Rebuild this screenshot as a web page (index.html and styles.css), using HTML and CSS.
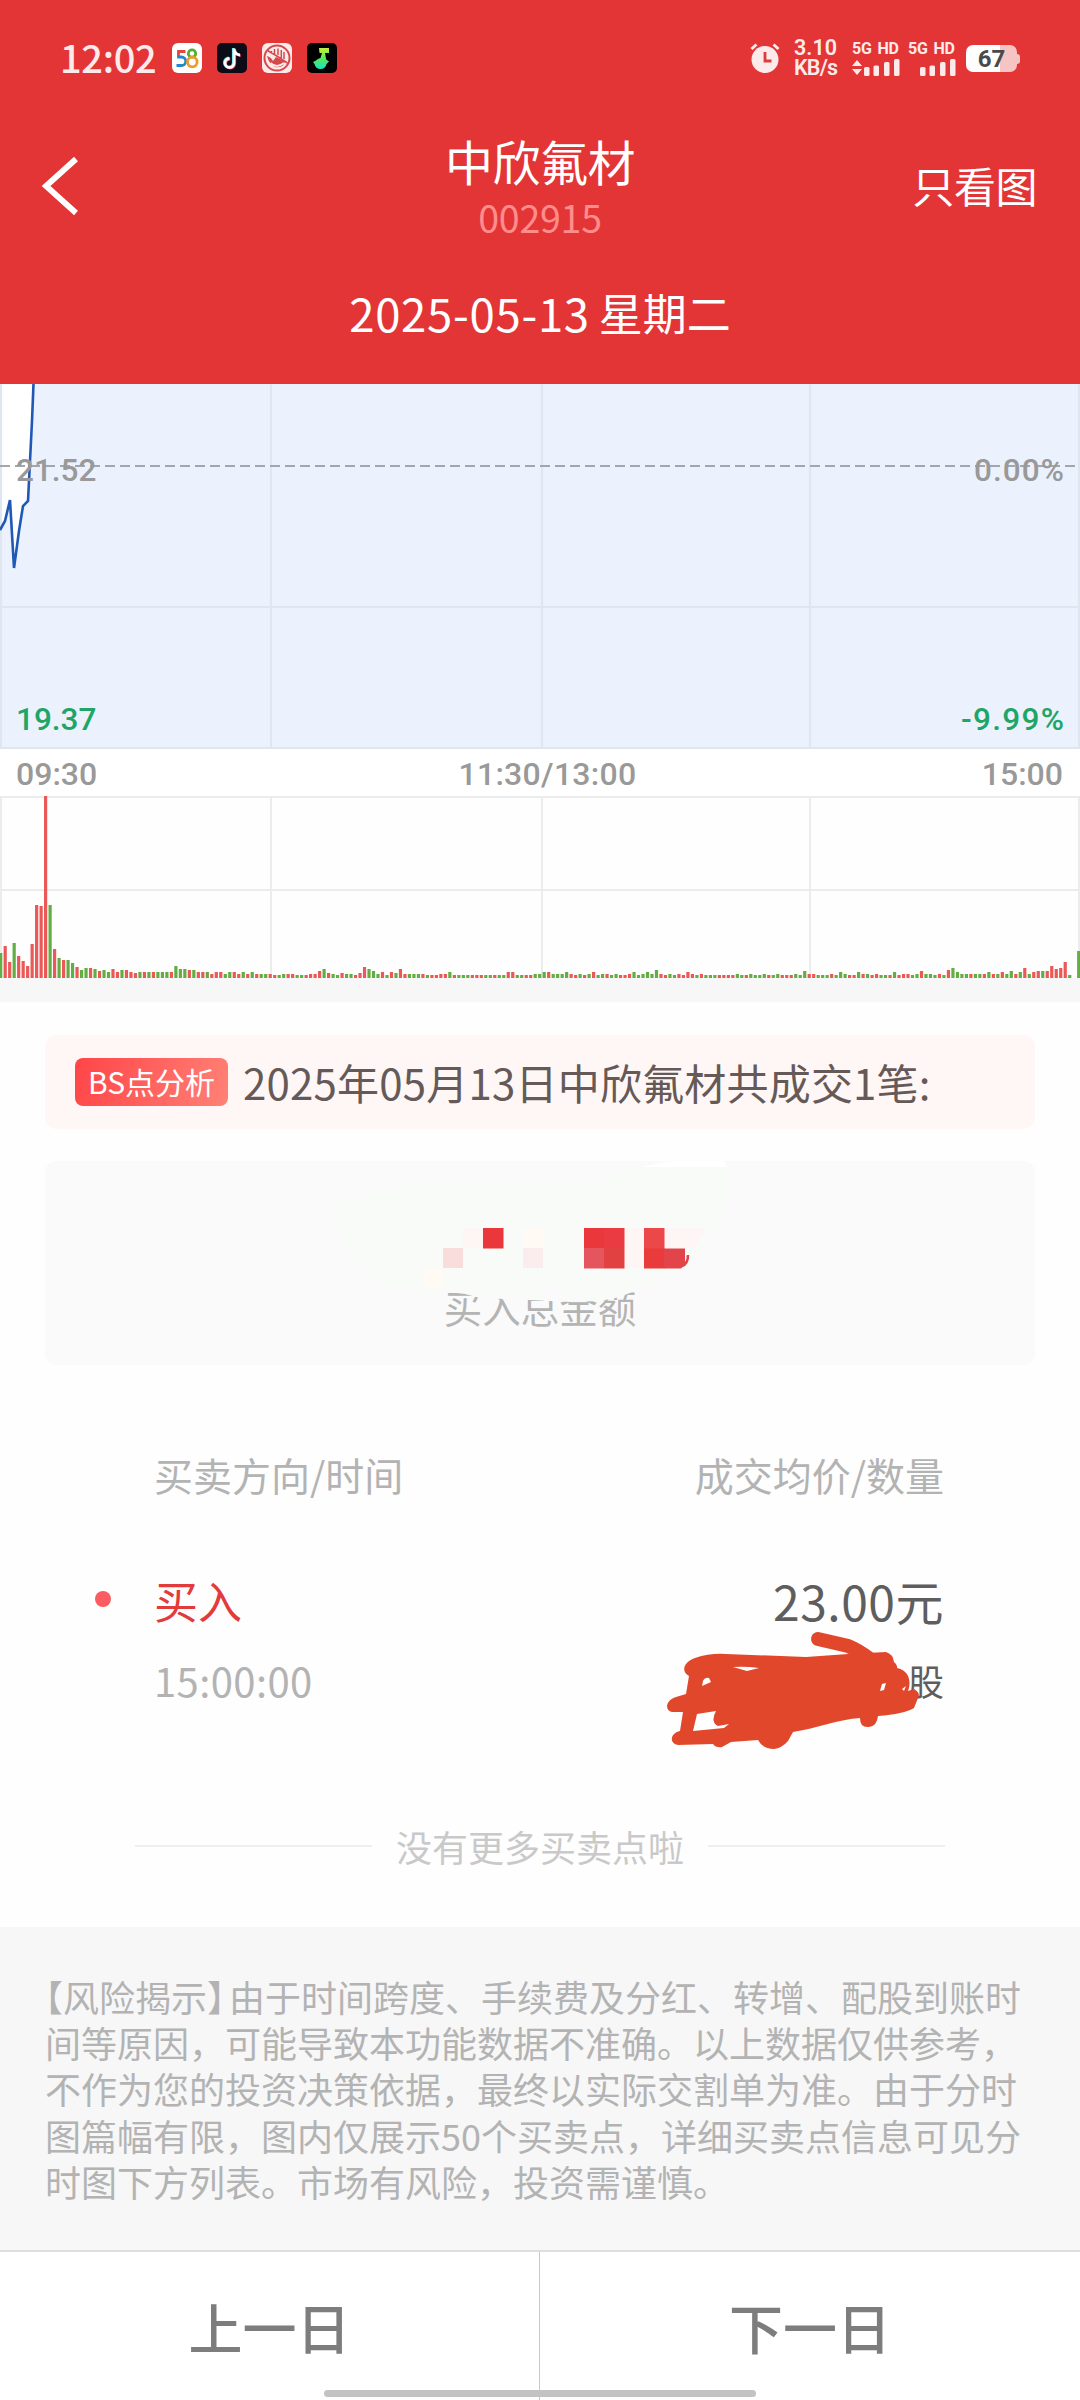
FILE: index.html
```html
<!DOCTYPE html>
<html lang="zh-CN">
<head>
<meta charset="utf-8">
<title>中欣氟材 002915</title>
<link rel="stylesheet" href="styles.css">
</head>
<body>
<header class="header">
  <div class="status">
    <div class="status-left">
      <span class="clock">12:02</span>
      <svg class="app" viewBox="0 0 30 30"><rect width="30" height="30" rx="6" fill="#fff"/><g fill="none" stroke-width="2.8"><path d="M13.500 8.500H6.500V14" stroke="#e2463f"/><path d="M5.200 14H9.500a4 4 0 0 1 0 8.500H4.500" stroke="#2686cc"/><circle cx="20" cy="10.500" r="3.700" stroke="#56b030"/><circle cx="20.300" cy="19" r="4.800" stroke="#ef9a2d"/></g></svg>
      <svg class="app" viewBox="0 0 30 30"><rect width="30" height="30" rx="5" fill="#0c0b18"/><g fill="none" stroke-width="2.8"><path d="M16.300 5v14.500a4.500 4.500 0 1 1-4.500-4.500M16.300 6q1.500 5.500 6 5.500" stroke="#42d9dc"/><path d="M17.700 6v14.500a4.500 4.500 0 1 1-4.500-4.500M17.700 7q1.500 5.500 6 5.500" stroke="#e84b63"/><path d="M17 5.500v14.500a4.500 4.500 0 1 1-4.500-4.500M17 6.500q1.500 5.500 6 5.500" stroke="#fff"/></g></svg>
      <svg class="app" viewBox="0 0 30 30"><rect width="30" height="30" rx="6" fill="#fdeaea"/><circle cx="15" cy="15" r="12.500" fill="none" stroke="#d4494c" stroke-width="2"/><path d="M5.500 7.500 14 12.500 25.500 20M9.500 10V8M12.500 11.500V6M16 12V5.500M19.300 15V7M22 16V9" stroke="#d4494c" stroke-width="1.500" fill="none"/><path d="M5 13q4 1 6 5l3-4 9 4.500-2 4q-3 2.500-8 1.500-6-3-8-11" fill="#d4494c"/><path d="M8.500 20q6 6 13.500 0" fill="none" stroke="#fdeaea" stroke-width="1.800"/></svg>
      <svg class="app" viewBox="0 0 30 30"><defs><linearGradient id="note" x1="0" y1="0" x2="0" y2="1"><stop offset="0" stop-color="#c8ef3c"/><stop offset=".5" stop-color="#58e85c"/><stop offset="1" stop-color="#17e5c0"/></linearGradient></defs><rect width="30" height="30" rx="5" fill="#000"/><path d="M12 5H22v5h-4l1.200 6.500L22 18.500 19.500 21q-1 5-6 5t-6-5L6 19l3-1.500q1.500-2 4.500-2.500L15 10h-2.500Z" fill="url(#note)"/></svg>
    </div>
    <div class="status-right">
      <svg class="alarm" viewBox="0 0 30 32"><circle cx="15" cy="17.500" r="13.500" fill="#fdeaea"/><path d="m1.500 7 5-4.500M28.500 7l-5-4.500" stroke="#fdeaea" stroke-width="3"/><path d="M15 10v9h6.500" stroke="#df3c3d" stroke-width="2.800" fill="none"/></svg>
      <div class="rate"><span>3.10</span><span>KB/s</span></div>
      <div class="sim"><span>5G HD</span><svg viewBox="0 0 48 17"><g fill="#fdeaea"><path d="m0 7 5-6 5 6ZM0 10h10l-5 6Z"/><rect x="12" y="8" width="5.500" height="9" rx="1.500"/><rect x="21.500" y="6.500" width="5.500" height="10.500" rx="1.500"/><rect x="32" y="3" width="5.500" height="14" rx="1.500"/><rect x="42" width="5.500" height="17" rx="1.500"/></g></svg></div>
      <div class="sim sim-b"><span>5G HD</span><svg viewBox="0 0 48 17"><g fill="#fdeaea"><rect x="12" y="8" width="5.500" height="9" rx="1.500"/><rect x="21.500" y="6.500" width="5.500" height="10.500" rx="1.500"/><rect x="32" y="3" width="5.500" height="14" rx="1.500"/><rect x="42" width="5.500" height="17" rx="1.500"/></g></svg></div>
      <div class="battery">67</div>
    </div>
  </div>
  <div class="nav">
    <svg class="back" viewBox="0 0 40 62"><path d="M36 4 6 31 36 58" fill="none" stroke="#fff" stroke-width="5.800"/></svg>
    <div class="stock"><h1>中欣氟材</h1><span>002915</span></div>
    <a class="only">只看图</a>
  </div>
  <div class="date"><span class="ymd">2025-05-13</span><span>星期二</span></div>
</header>
<main>
  <svg class="price" viewBox="0 0 1080 365">
    <rect width="1080" height="365" fill="#ebf2fe"/>
    <path d="M0 0H33.500L32 37 28 117 23 122 19 147 14 187 10 116 5 137 0 146Z" fill="#fff"/>
    <path d="M1 0V365M271 0V365M542 0V365M810 0V365M1079 0V365M0 223H1080M0 364H1080" stroke="#e0e6f0" stroke-width="2.200" fill="none"/>
    <path d="M0 82H1080" stroke="#a2a6ad" stroke-width="2" stroke-dasharray="10 5"/>
    <path d="M0 146 5 137 10 116 14 184 19 147 23 122 28 117 32 37 33.500 0" fill="none" stroke="#2058b5" stroke-width="2.600"/>
    <g class="quote"><text x="16" y="97" fill="#999">21.52</text><text x="1064" y="97" text-anchor="end" fill="#999" textLength="90">0.00%</text><text x="16" y="346" fill="#20a566">19.37</text><text x="1064" y="346" text-anchor="end" fill="#20a566" textLength="103">-9.99%</text></g>
  </svg>
  <div class="times"><span>09:30</span><span class="noon">11:30/13:00</span><span>15:00</span></div>
  <svg class="volume" viewBox="0 0 1080 182"><path d="M0 1H1080M0 94H1080M1 0V182M271 0V182M542 0V182M810 0V182M1079 0V182" stroke="#ececec" stroke-width="2"/><g id="bars"></g></svg>
  <div class="strip"></div>
  <section class="trades">
    <div class="banner"><span class="tag">BS点分析</span><span class="message">2025年05月13日中欣氟材共成交1笔:</span></div>
    <div class="summary">
      <span>买入总金额</span>
      <svg class="mosaic" viewBox="45 1161 990 204">
        <path d="M335 1220 350 1200Q380 1188 430 1185L600 1180 640 1167H727Q731 1200 720 1222 700 1265 637 1290L620 1297 600 1301 570 1302 530 1300 480 1298 465 1294 440 1291 385 1290Q345 1255 335 1220Z" fill="#f9fbf8"/>
        <path d="M643 1167Q668 1160 685 1161H724L727 1167Z" fill="#fff"/>
        <path d="M463 1228h20v20h-20zM624 1228h20v40h-20zM664 1228h42l-12 20h-30z" fill="#fdf6f5"/>
        <path d="M523 1228h20v20h-20zM423 1268h20v20h-20z" fill="#fffaf3"/>
        <path d="M443 1248h20v20h-20z" fill="#f9dddd"/><path d="M523 1248h20v20h-20z" fill="#fbecee"/>
        <path d="M483 1228h20.500v20.500h-20.500zM584 1228h20v20h-20z" fill="#ea373b"/><path d="M604 1228h20.500v20h-20.500z" fill="#e93b41"/>
        <path d="M584 1248h20v20.500h-20z" fill="#e4555e"/><path d="M604 1248h20.500v20.500h-20.500z" fill="#e24142"/>
        <path d="M644 1228h20.500v21h-20.500z" fill="#ec4749"/><path d="M644 1248.500h20.500v20h-20.500z" fill="#e93b3b"/><path d="M664 1248.500h21v16l-4 4h-17z" fill="#e2444a"/>
        <path d="M688 1255q0 9-6 11" fill="none" stroke="#e2444a" stroke-width="2.600"/>
        <path d="M544 1289h20v12h-20z" fill="#fcf9fd"/>
      </svg>
    </div>
    <div class="columns"><span>买卖方向/时间</span><span>成交均价/数量</span></div>
    <div class="row"><i class="dot"></i><span class="buy">买入</span><span class="cost">23.00元</span></div>
    <div class="row second"><span class="at">15:00:00</span><span class="shares">股</span>
      <svg class="scribble" viewBox="0 0 260 124" fill="#e1482b"><path d="M86 24 166 27 208 24 246 22Q253 24 254 32 258 35 257 38C268 40 272 50 268 61L274 59Q281 63 278 68L274 78Q264 84 238 86 237 96 229 97 220 98 220 88C200 89 174 99 153 102L148 111Q142 118 134 119 123 119 118 110L91 112 82 117Q76 118 73 114L38 115C29 114 30 103 40 101L43 82 32 82C24 80 26 70 36 67L46 64 49 46C41 42 43 32 55 28Q70 23 86 24Z"/><path d="M178 9 208 16Q218 20 230 29" fill="none" stroke="#e1482b" stroke-width="14" stroke-linecap="round"/><g fill="#fff"><path d="M93 37Q105 36 119 38L107 41ZM63 51Q65 47 69 48L71 52 62 56ZM57 84 76 81Q70 92 78 96L89 94 84 98 53 101ZM242 54 246 53 244 60 240 61ZM262 59 266 56 264 61Z"/></g></svg>
    </div>
    <div class="end"><i></i><span>没有更多买卖点啦</span><i></i></div>
  </section>
  <section class="risk"><p><span class="open">【</span>风险揭示<span class="close">】</span>由于时间跨度、手续费及分红、转增、配股到账时<br>间等原因，可能导致本功能数据不准确。以上数据仅供参考，<br>不作为您的投资决策依据，最终以实际交割单为准。由于分时<br>图篇幅有限，图内仅展示50个买卖点，详细买卖点信息可见分<br>时图下方列表。市场有风险，投资需谨慎。</p></section>
</main>
<footer class="days"><a>上一日</a><a>下一日</a><i class="home"></i></footer>
<script src="bars.js"></script>
</body>
</html>
```
FILE: styles.css
```css
* { box-sizing: border-box; }
body { margin: 0; width: 1080px; height: 2400px; overflow: hidden; background: #fefefe; font-family: "Noto Sans CJK SC", "Noto Sans", sans-serif; color: #5e5e5e; display: flex; flex-direction: column; }
svg { display: block; flex: none; }
span, a { white-space: nowrap; }
i { display: block; }
.header { height: 384px; background: #e33536; color: #fff; padding-top: 36px; flex: none; }
.status { height: 44px; display: flex; justify-content: space-between; padding: 0 60px 0 60px; color: #fdeaea; }
.status-left { display: flex; align-items: center; gap: 15px; }
.clock { font-size: 38px; font-weight: 500; line-height: 42px; height: 44px; width: 97px; letter-spacing: -.3px; }
.app { width: 30px; height: 30px; }
.status-right { display: flex; align-items: center; }
.alarm { width: 30px; height: 32px; margin-right: 14px; }
.rate { display: flex; flex-direction: column; width: 44px; margin-right: 14px; font: 600 21.5px/20px Roboto, sans-serif; }
.rate span:last-child { letter-spacing: -.8px; }
.sim { display: flex; flex-direction: column; gap: 2px; width: 48px; margin-right: 8px; font: 700 16px/16px Roboto, sans-serif; word-spacing: 2px; letter-spacing: -.2px; }
.sim svg { width: 48px; height: 17px; }
.sim-b { margin-right: 10px; }
.battery { position: relative; width: 51px; height: 27px; border-radius: 7px; background: linear-gradient(90deg, #fff 67%, #f7c4c4 67%); color: #4a4a4a; font: 700 24px/28px Roboto, sans-serif; text-align: center; margin-right: 3px; }
.battery::after { content: ""; position: absolute; right: -3px; top: 9px; width: 3px; height: 10px; border-radius: 0 3px 3px 0; background: #f7c4c4; }
.nav { height: 176px; display: grid; grid-template-columns: 300px 1fr 300px; }
.back { width: 40px; height: 62px; margin: 75px 0 0 40px; }
.stock { display: flex; flex-direction: column; align-items: center; padding-top: 50px; }
.stock h1 { margin: 0; font-size: 48px; line-height: 60px; font-weight: 400; letter-spacing: -.5px; }
.stock span { font-size: 37.5px; line-height: 50px; color: #ff8d8c; padding-top: 2px; letter-spacing: -.2px; }
.only { font-size: 42px; line-height: 60px; justify-self: end; margin: 75px 43px 0 0; letter-spacing: -.5px; }
.date { height: 118px; display: flex; justify-content: center; gap: 9px; font-size: 44px; line-height: 113px; }
.ymd { font-size: 45.5px; letter-spacing: .7px; }
.price { width: 1080px; height: 365px; }
.quote { font: 500 31.5px Roboto, sans-serif; }
.times { height: 47px; padding: 0 17px 0 16px; display: flex; justify-content: space-between; font: 500 32px/50px Roboto, sans-serif; color: #999; background: #fff; }
.noon { letter-spacing: .3px; padding-left: 16px; }
.volume { width: 1080px; height: 182px; background: #fefefe; }
.strip { height: 24px; background: #f7f7f7; }
.trades { height: 925px; padding: 33px 45px 0; }
.banner { height: 94px; border-radius: 12px; background: #fff7f5; display: flex; align-items: center; gap: 15px; padding-left: 30px; font-size: 42px; color: #665a59; }
.message { letter-spacing: .2px; padding-bottom: 2px; }
.tag { width: 153px; height: 48px; border-radius: 8px; background: linear-gradient(105deg, #ff4548, #ff8176); color: #fff; font-size: 30px; line-height: 46px; text-align: center; }
.summary { position: relative; height: 204px; margin-top: 32px; border-radius: 12px; background: #fafafa; display: flex; justify-content: center; padding-top: 117px; font-size: 38.5px; line-height: 56px; color: #b4b4b4; }
.mosaic { position: absolute; left: 0; top: 0; width: 990px; height: 204px; }
.columns { display: flex; justify-content: space-between; margin: 79px 91px 0 109px; font-size: 39px; line-height: 60px; color: #b3b3b3; }
.row { display: flex; align-items: center; height: 64px; margin: 64px 91px 0 50px; }
.dot { width: 16px; height: 16px; border-radius: 50%; background: #fb5c61; margin: -2px 43px 0 0; }
.buy { font-size: 44px; color: #e33a3b; }
.cost { font-size: 48px; margin-left: auto; letter-spacing: .5px; }
.second { position: relative; height: 64px; margin: 16px 91px 0 109px; }
.at { font-size: 40px; color: #b3b3b3; letter-spacing: .4px; }
.shares { font-size: 36px; margin-left: auto; }
.scribble { position: absolute; left: 486px; top: -18px; width: 260px; height: 124px; overflow: visible; }
.end { display: flex; align-items: center; justify-content: space-between; height: 60px; margin: 104px 90px 0 90px; font-size: 36px; color: #c9c9c9; }
.end i { width: 237px; height: 2px; background: #efefef; }
.end span { padding-bottom: 1px; }
.risk { height: 323px; background: #f7f7f7; padding: 46px 45px 0; }
.risk p { margin: 0; font-size: 36px; line-height: 46.2px; color: #b3b3b3; white-space: nowrap; }
.open { margin-left: -18px; }
.close { margin-right: -14px; }
.days { position: relative; flex: none; height: 150px; border-top: 2px solid #dedede; background: #fff; display: grid; grid-template-columns: 1fr 1fr; font-size: 54px; line-height: 149px; font-weight: 500; text-align: center; color: #7d7d7d; }
.days a:first-child { border-right: 1px solid #c9c9c9; }
.home { position: absolute; left: 324px; bottom: 3px; width: 432px; height: 7px; border-radius: 4px; background: #c3c3c3; }
```
FILE: bars.js
```js
// One entry per minute: r = up, g = down, followed by the bar height.
const volume = `g25 r32 r16 g35 r22 r17 r12 r34 r73 r72 r182 g73 r29 g20 r18 g18 g15 r11 g8 g10 r10 g9 r7 g8 g6 r9 r6 g8 r8 r6
r5 g6 r6 g6 r6 g6 g6 g6 r6 g12 g9 g9 r8 g8 r6 r6 g6 r4 r6 r6 g4 g6 r6 r4 g6 r4 g6 r4 g4 g4
r4 r3 g3 g4 r4 r4 g3 g3 r3 r4 r4 r7 g9 r5 g4 g3 r5 g4 g4 r3 r5 r11 g9 g7 g4 r6 g3 r6 g5 r9
r4 g4 g4 g4 r4 g3 r3 r3 r4 r4 g6 r3 g3 g3 g3 r3 r3 r3 g3 g3 r3 g3 g3 r6 r6 g3 g3 r3 r3 g4
g4 g6 r6 g4 g4 g4 g6 r4 r3 g4 r3 g4 r6 g3 g4 r4 g3 g4 r3 r3 r4 g6 g3 g4 g6 g4 g8 r4 r3 g4
g3 r4 r3 r6 r4 g3 r4 g3 g3 g3 r3 r3 r3 r3 g4 g3 r3 g4 g3 g3 g4 r3 g3 g4 r3 r3 r3 g4 g3 g7
r4 r4 g3 g3 g3 r4 g3 g6 g4 r3 r3 g6 r4 g4 r3 r4 g3 g3 r3 g6 r3 r4 r4 g3 g4 r7 g4 g4 g3 r4
g3 r8 g10 g6 g4 g4 r4 g4 g4 r4 g6 r4 g4 r6 g4 g7 r4 g6 r10 g4 r6 r7 g7 r7 r12 r9 r10 r16 g3 g0 g27`.split(/\s+/);
const bars = document.getElementById("bars");
volume.forEach((entry, i) => {
  const h = Number(entry.slice(1));
  const bar = document.createElementNS("http://www.w3.org/2000/svg", "rect");
  bar.setAttribute("x", i * 1078 / 240 - 0.9);
  bar.setAttribute("y", 182 - h);
  bar.setAttribute("width", 3.2);
  bar.setAttribute("height", h);
  bar.setAttribute("fill", entry[0] === "r" ? "#ea5957" : "#63ae43");
  bars.append(bar);
});
```
